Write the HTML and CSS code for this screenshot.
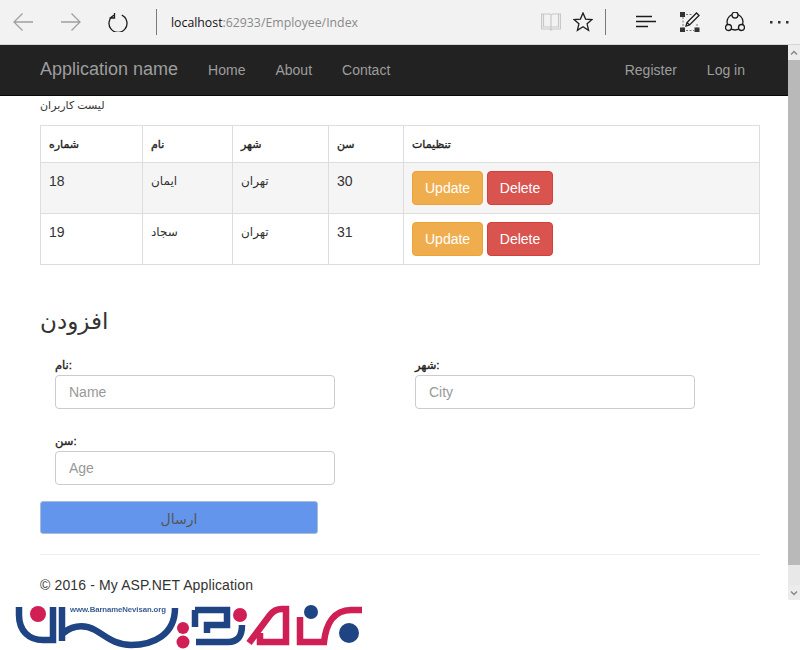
FILE: index.html
```html
<!DOCTYPE html>
<html lang="en">
<head>
<meta charset="utf-8">
<title>Employee</title>
<link rel="stylesheet" href="styles.css">
</head>
<body>
<div class="app">
  <header class="toolbar">
    <svg class="ic" width="20" height="20" viewBox="0 0 20 20"><path class="s-grey" d="M20 10H1M9.500 1.500 1 10l8.500 8.500"/></svg>
    <svg class="ic ml28" width="20" height="20" viewBox="0 0 20 20"><path class="s-grey" d="M0 10h19M10.500 1.500 19 10l-8.500 8.500"/></svg>
    <svg class="ic ml27" width="20" height="20" viewBox="0 0 20 20"><path class="s-dark" d="M6.200 2.200A9 9 0 1 0 13.800 2.200M6.500 0v5H1.500" transform="translate(0 1)"/></svg>
    <span class="sep ml28"></span>
    <div class="url"><span class="host">localhost</span>:62933/Employee/Index</div>
    <svg class="ic" width="20" height="20" viewBox="0 0 20 20"><path class="s-light" d="M.500 2h8l1.500 1 1.500-1h8v15h-8l-1.500 1-1.500-1h-8zM10 3v15M2.500 2v13h7M17.500 2v13h-7"/></svg>
    <svg class="ic ml12" width="20" height="20" viewBox="0 0 20 20"><path class="s-dark" d="M10 1l2.600 6.100 6.400.5-4.900 4.200 1.500 6.500L10 14.800 4.400 18.300l1.500-6.500L1 7.600l6.400-.5z"/></svg>
    <span class="sep ml12"></span>
    <svg class="ic ml30" width="20" height="20" viewBox="0 0 20 20"><path class="s-dark" d="M0 4.500h16M0 9.500h20M0 14.500h12"/></svg>
    <svg class="ic ml24" width="20" height="20" viewBox="0 0 20 20"><path class="s-dots" d="M3 5v11M17 12v4M6 2.500h7M6 18.500h8"/><path class="s-fill" d="M0 0h5v5H0zM0 15.500h5v5H0zM14.500 15.500h5v5h-5z"/><path class="s-dark" d="M6 14l1-3.500L16.500 1 19 3.500 9.500 13zM7 10.500 9.500 13"/></svg>
    <svg class="ic ml25" width="20" height="20" viewBox="0 0 20 20"><g class="s-dark"><circle cx="10" cy="10" r="8"/></g><circle class="s-knob" cx="10" cy="3" r="3"/><circle class="s-knob" cx="3.500" cy="15.500" r="3"/><circle class="s-knob" cx="16.500" cy="15.500" r="3"/></svg>
    <svg class="ic ml24" width="20" height="20" viewBox="0 0 20 20"><path class="s-fill" d="M1 9h2.500v2.500H1zM9 9h2.500v2.500H9zM17 9h2.500v2.500H17z"/></svg>
  </header>

  <div class="viewport">
    <div class="page">
      <nav class="navbar">
        <a class="brand">Application name</a>
        <a class="nav-link">Home</a>
        <a class="nav-link">About</a>
        <a class="nav-link">Contact</a>
        <a class="nav-link push">Register</a>
        <a class="nav-link">Log in</a>
      </nav>
      <main class="container">
        <p class="intro fa">لیست کاربران</p>
        <table class="grid">
          <thead>
            <tr>
              <th class="c1 fa">شماره</th>
              <th class="c2 fa">نام</th>
              <th class="c3 fa">شهر</th>
              <th class="c4 fa">سن</th>
              <th class="fa">تنظیمات</th>
            </tr>
          </thead>
          <tbody>
            <tr class="odd">
              <td>18</td>
              <td class="fa">ایمان</td>
              <td class="fa">تهران</td>
              <td>30</td>
              <td><button class="btn warn">Update</button> <button class="btn danger">Delete</button></td>
            </tr>
            <tr>
              <td>19</td>
              <td class="fa">سجاد</td>
              <td class="fa">تهران</td>
              <td>31</td>
              <td><button class="btn warn">Update</button> <button class="btn danger">Delete</button></td>
            </tr>
          </tbody>
        </table>
        <h2 class="title fa">افزودن</h2>
        <form class="form">
          <div class="field">
            <label class="label fa">نام:</label>
            <input class="input" placeholder="Name">
          </div>
          <div class="field">
            <label class="label fa">شهر:</label>
            <input class="input" placeholder="City">
          </div>
          <div class="field">
            <label class="label fa">سن:</label>
            <input class="input" placeholder="Age">
          </div>
        </form>
        <button class="submit fa">ارسال</button>
        <hr class="rule">
        <footer class="foot">© 2016 - My ASP.NET Application</footer>
      </main>
    </div>
    <div class="scrollbar">
      <div class="sb-btn"><svg width="12" height="8" viewBox="0 0 12 8"><path class="s-sb" d="M3 5.500 6 2.500l3 3"/></svg></div>
      <div class="sb-thumb"></div>
      <div class="sb-track"></div>
      <div class="sb-btn"><svg width="12" height="8" viewBox="0 0 12 8"><path class="s-sb" d="M3 2.500 6 5.500l3-3"/></svg></div>
    </div>
  </div>

  <div class="brandstrip">
    <div class="logo">
      <svg width="350" height="48" viewBox="15 603 350 48">
        <g class="navy">
          <path d="M19 607v8c0 16 10 25 24 25h10V607"/>
          <path d="M62 607v34M62 634c8-7 20-11 33-4 11 6 19 15 36 15 22 0 44-10 44-37"/>
          <path d="M195 610h32v15h-20v8M195 610v17M196 642h32c10 0 14-6 14-17"/>
        </g>
        <g class="crimson">
          <path d="M249 643l21-28c3-4 7-6 12-6h4v33h-26v-9"/>
          <path d="M300 617v25h24c2-18 10-32 27-32h11"/>
        </g>
        <circle class="f-crimson" cx="38" cy="614" r="8"/>
        <circle class="f-crimson" cx="183" cy="628" r="6"/>
        <circle class="f-crimson" cx="183" cy="642" r="6.500"/>
        <circle class="f-crimson" cx="240" cy="615" r="7"/>
        <circle class="f-navy" cx="311" cy="612" r="7"/>
        <circle class="f-navy" cx="349" cy="633" r="10"/>
      </svg>
      <span class="logo-url">www.BarnameNevisan.org</span>
    </div>
  </div>
</div>
</body>
</html>
```
FILE: styles.css
```css
* { box-sizing: border-box; }
html, body { margin: 0; padding: 0; background: #fff; overflow: hidden; }
body { font-family: "Liberation Sans", Arial, sans-serif; font-size: 14px; color: #333; }
.fa { font-family: "Liberation Sans", "Noto Sans", "DejaVu Sans", sans-serif; }

.app { width: 800px; height: 650px; display: flex; flex-direction: column; overflow: hidden; }

/* browser toolbar */
.toolbar { height: 45px; flex: none; display: flex; align-items: center; padding: 0 11px 1px 13px; background: #f2f2f2; border-bottom: 1px solid #d6d6d6; }
.ic { flex: none; display: block; }
.ml12 { margin-left: 12px; }
.ml24 { margin-left: 24px; }
.ml25 { margin-left: 25px; }
.ml27 { margin-left: 27px; }
.ml28 { margin-left: 28px; }
.ml30 { margin-left: 30px; }
.sep { flex: none; width: 1px; height: 26px; background: #7a7a7a; }
.url { flex: 1; margin-left: 14px; padding-top: 1px; font-family: "Open Sans", sans-serif; font-size: 12.300px; color: #8a8a8a; white-space: nowrap; }
.host { color: #111; }
svg path, svg circle { fill: none; }
.s-grey { stroke: #a0a0a0; stroke-width: 1.300; }
.s-dark { stroke: #1c1c1c; stroke-width: 1.300; }
.s-light { stroke: #c8c8c8; stroke-width: 1.200; }
.s-dots { stroke: #777; stroke-width: 1; stroke-dasharray: 2 1.500; }
svg .s-fill { fill: #333; }
svg .s-knob { fill: #f2f2f2; stroke: #1c1c1c; stroke-width: 1.300; }
.s-sb { stroke: #8a8a8a; stroke-width: 1.500; }

/* viewport */
.viewport { flex: none; height: 555px; display: flex; }
.page { flex: 1; min-width: 0; display: flex; flex-direction: column; }
.scrollbar { flex: none; width: 12px; display: flex; flex-direction: column; background: #e8e8e8; }
.sb-btn { height: 15px; flex: none; display: flex; align-items: center; justify-content: center; background: #ececec; }
.sb-thumb { height: 505px; flex: none; background: #b9b9b9; }
.sb-track { flex: 1; }

/* navbar */
.navbar { height: 51px; flex: none; display: flex; align-items: center; padding: 0 28px 1px 40px; background: #222; border-bottom: 1px solid #080808; }
.brand { font-size: 18px; color: #9d9d9d; margin-right: 15px; }
.nav-link { color: #9d9d9d; padding: 0 15px; }
.push { margin-left: auto; }

/* content */
.container { flex: 1; padding: 0 28px 0 40px; color: #333; }
.intro { margin: 0; height: 29px; padding-top: 1px; font-size: 11px; line-height: 17px; }
.grid { width: 720px; border-collapse: collapse; table-layout: fixed; }
.grid th, .grid td { border: 1px solid #ddd; padding: 8px; line-height: 20px; vertical-align: top; text-align: left; font-size: 14px; }
.grid th.fa { font-size: 11px; font-weight: normal; color: #222; -webkit-text-stroke: 0.35px #222; }
.grid td.fa { font-size: 12px; }
.c1 { width: 102px; }
.c2 { width: 90px; }
.c3 { width: 96px; }
.c4 { width: 75px; }
.odd { background: #f5f5f5; }

.btn { display: inline-block; height: 34px; padding: 6px 12px; font: 14px/20px "Liberation Sans", Arial, sans-serif; color: #fff; border: 1px solid; border-radius: 4px; vertical-align: top; }
.warn { background: #f0ad4e; border-color: #eea236; }
.danger { width: 66px; padding: 6px 0; background: #d9534f; border-color: #d43f3a; }

.title { margin: 38px 0 0; height: 48px; font-size: 23px; line-height: 36px; font-weight: normal; color: #333; }
.form { display: grid; grid-template-columns: 360px 360px; row-gap: 15px; }
.field { padding: 0 65px 0 15px; height: 61px; display: flex; flex-direction: column; }
.label { height: 20px; padding-top: 2px; font-size: 11.500px; line-height: 14px; font-weight: normal; color: #222; -webkit-text-stroke: 0.35px #222; margin-top: 5px; }
.input { width: 280px; height: 34px; margin-top: -1px; padding: 6px 13px; font: 14px/20px "Liberation Sans", Arial, sans-serif; color: #555; background: #fff; border: 1px solid #ccc; border-radius: 4px; outline: none; }
.input::placeholder { color: #999; opacity: 1; }
.submit { display: block; width: 278px; height: 33px; margin-top: 13px; padding: 2px 0 0; font-size: 14px; color: #555; background: #6495ed; border: 1px solid #a9bcd8; border-radius: 3px; }
.rule { margin: 20px 0 0; border: 0; border-top: 1px solid #eee; }
.foot { margin-top: 20px; line-height: 20px; letter-spacing: 0.13px; color: #333; }

/* logo */
.brandstrip { flex: 1; min-height: 0; background: #fff; padding: 3px 0 0 15px; }
.logo { position: relative; width: 350px; height: 47px; filter: blur(0.4px); }
.logo svg { display: block; }
svg .navy path { stroke: #1f4483; stroke-width: 6.500; }
svg .crimson path { stroke: #cf1f54; stroke-width: 6.500; }
svg .f-crimson { fill: #cf1f54; }
svg .f-navy { fill: #1f4483; }
.logo-url { position: absolute; left: 55px; top: 1px; font-size: 7.800px; line-height: 12px; font-weight: bold; letter-spacing: -.1px; color: #3b5c93; white-space: nowrap; }
```
